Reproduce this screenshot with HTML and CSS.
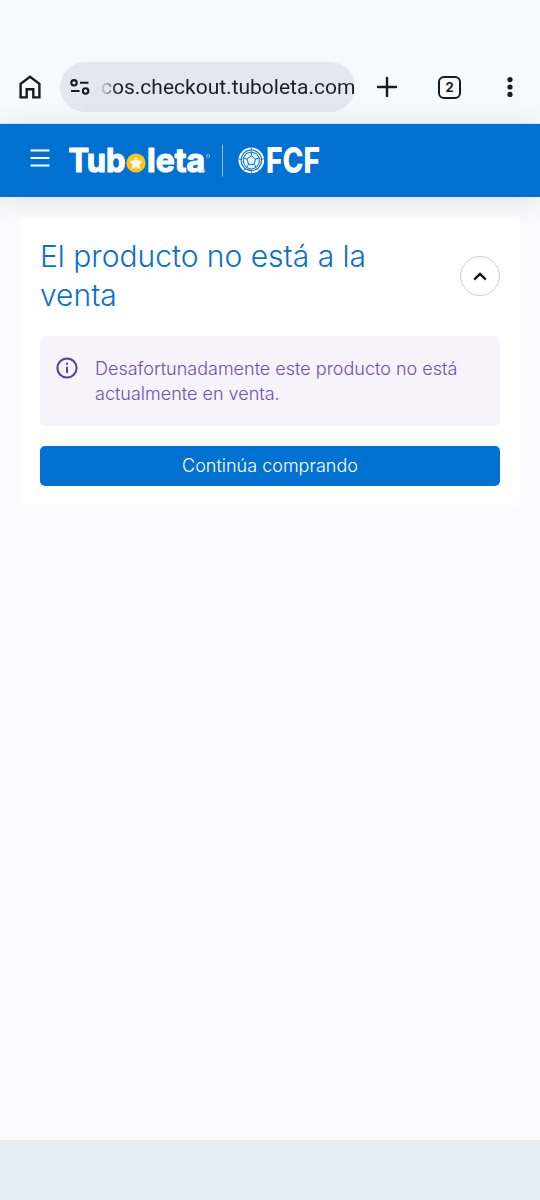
FILE: index.html
```html
<!DOCTYPE html>
<html lang="es">
<head>
<meta charset="utf-8">
<meta name="viewport" content="width=device-width, initial-scale=1">
<title>Tuboleta</title>
<link rel="stylesheet" href="styles.css">
</head>
<body>
<div class="browser-bar">
  <svg class="home" width="22" height="24" viewBox="0 0 22 24"><path d="M1.6 22.4V8.8L11 1.8l9.4 7v13.6h-6.1v-8.2H7.7v8.2z"/></svg>
  <div class="address">
    <svg class="tune" width="20" height="16" viewBox="0 0 20 16"><circle cx="4" cy="3.8" r="2.7"/><path d="M10 3.8h8.5M1 12h8.5"/><circle cx="15.6" cy="12" r="2.7"/></svg>
    <span class="url">cos.checkout.tuboleta.com</span>
  </div>
  <svg class="plus" width="20" height="20" viewBox="0 0 20 20"><path d="M10 1v18M1 10h18"/></svg>
  <span class="tabs">2</span>
  <svg class="more" width="6" height="20" viewBox="0 0 6 20"><circle cx="3" cy="2.6" r="2.6"/><circle cx="3" cy="10" r="2.6"/><circle cx="3" cy="17.4" r="2.6"/></svg>
</div>
<header class="site-header">
  <svg class="menu" width="20" height="18" viewBox="0 0 20 18"><path d="M.5 1.5h19M.5 9h19M.5 16.5h19"/></svg>
  <svg class="logo" width="260" height="40" viewBox="0 0 260 40">
    <text class="word" x="1.5" y="32" textLength="57" lengthAdjust="spacingAndGlyphs">Tub</text>
    <circle class="coin" cx="69" cy="23" r="9.6"/>
    <path class="star" d="M69 17.2l1.9 3.7 4.1.6-3 2.9.7 4.1-3.7-1.9-3.7 1.9.7-4.1-3-2.9 4.1-.6z"/>
    <text class="word" x="80" y="32" textLength="58" lengthAdjust="spacingAndGlyphs">leta</text>
    <circle class="mark" cx="141.2" cy="16" r="1.5"/><circle class="mark" cx="136.5" cy="31" r="1.5"/>
    <path class="divider" d="M155.5 4.5v32"/>
    <circle class="rim" cx="184.3" cy="20.3" r="11.8"/>
    <circle class="ball" cx="184.3" cy="20.3" r="9.7"/>
    <path class="seam" d="M184.3 15.8l4.4 3.3-1.7 5.2h-5.4l-1.7-5.2zM184.3 15.8v-3.6M188.7 19.1l3.6-1.1M187 24.3l2.2 3.2M181.6 24.3l-2.2 3.2M179.9 19.1l-3.6-1.1M179.2 13.5l5.1-1.5 5.1 1.5 2.9 4.5-.2 5.3-2.9 4.2-4.9 1.6-4.9-1.6-2.9-4.2-.2-5.3z"/>
    <path class="rim-gap" d="M184.3 7.8v3M196.8 18.8l-3 .7M191.8 30.5l-1.8-2.4M184.3 32.8v-3M176.8 30.5l1.8-2.4M171.8 18.8l3 .7"/>
    <text class="fcf" x="199" y="33.2" textLength="54" lengthAdjust="spacingAndGlyphs">FCF</text>
  </svg>
</header>
<main class="page">
  <section class="card">
    <div class="card-head">
      <h1 class="title">El producto no está a la venta</h1>
      <button class="collapse" aria-label="Contraer"><svg width="14" height="9" viewBox="0 0 14 9"><path d="M1.2 7.6L7 1.9l5.8 5.7"/></svg></button>
    </div>
    <div class="notice">
      <svg class="info" width="22" height="22" viewBox="0 0 22 22"><circle cx="11" cy="11" r="9.6"/><path d="M11 9.7v6.2"/><path d="M11 5.7v2"/></svg>
      <p class="message">Desafortunadamente este producto no está actualmente en venta.</p>
    </div>
    <button class="continue">Continúa comprando</button>
  </section>
</main>
<div class="system-bar"></div>
</body>
</html>
```

FILE: styles.css
```css
* { box-sizing: border-box; }
body {
  margin: 0;
  min-height: 1200px;
  display: flex;
  flex-direction: column;
  background: #fbfbfd;
  font-family: Inter, "Liberation Sans", sans-serif;
}
svg { display: block; flex: none; overflow: visible; fill: none; }
.browser-bar {
  height: 124px;
  padding: 51px 27px 0 19px;
  display: flex;
  align-items: center;
  background: #f6f9fe;
  border-bottom: 1px solid #dcebf8;
  color: #171b20;
}
.home { stroke: #171b20; stroke-width: 2.4; }
.address {
  width: 295px;
  height: 50px;
  margin-left: 19px;
  padding-left: 10px;
  border-radius: 25px;
  display: flex;
  align-items: center;
  background: #e1e8f0;
}
.tune { stroke: #171b20; stroke-width: 2.1; }
.url {
  margin-left: 11px;
  white-space: nowrap;
  font: 400 21px/50px Roboto, sans-serif;
  letter-spacing: 0;
  background: linear-gradient(90deg, #cdd3da 0, #777d84 9px, #1b2026 15px);
  background-clip: text;
  color: transparent;
}
.plus { margin-left: 22px; stroke: #171b20; stroke-width: 2.4; stroke-linecap: round; }
.tabs {
  width: 23px;
  height: 23px;
  margin-left: 41px;
  border: 2.4px solid #171b20;
  border-radius: 6px;
  font: 700 13px/18px Inter, sans-serif;
  text-align: center;
}
.more { margin-left: auto; fill: #171b20; }
.site-header {
  height: 73px;
  padding: 0 30px;
  display: flex;
  align-items: flex-start;
  background: #0070d1;
  box-shadow: 0 5px 28px rgba(40, 50, 75, .12);
}
.menu { margin-top: 25px; stroke: #fff; stroke-width: 2; }
.logo { margin: 16px 0 0 17px; }
.word { fill: #fff; stroke: #fff; stroke-width: 1.2; stroke-linejoin: round; font: 700 32px Inter, sans-serif; }
.coin { fill: #fcc51a; }
.star { fill: #fff; stroke: #fff; stroke-width: .7; stroke-linejoin: round; }
.mark { stroke: #a9d0f2; stroke-width: .8; }
.divider { stroke: #8bc0ed; }
.rim { stroke: #fff; stroke-width: 2.1; }
.ball { fill: #eaf5ff; }
.seam { stroke: #0070d1; stroke-width: 1; }
.rim-gap { stroke: #0070d1; stroke-width: 1; }
.fcf { fill: #fff; font: 800 35px Inter, sans-serif; }
.page { flex: 1; padding: 20px; }
.card { height: 288px; padding: 19px 20px 20px; border-radius: 4px; background: #fff; position: relative; }
.card-head { height: 80px; display: flex; justify-content: space-between; align-items: center; }
.title { width: 370px; margin: 0; color: #0c70c8; font-weight: 300; font-size: 30px; line-height: 39px; }
.collapse {
  width: 40px;
  height: 40px;
  padding: 0;
  border: 1px solid #d0d0d0;
  border-radius: 50%;
  display: grid;
  place-items: center;
  background: #fff;
}
.collapse path { stroke: #111; stroke-width: 2.2; }
.notice {
  height: 90px;
  margin-top: 20px;
  padding: 20px 16px;
  display: flex;
  gap: 17px;
  border-radius: 5px;
  background: #f6f3fb;
}
.info { margin-top: 1px; stroke: #5b3ca5; stroke-width: 2; }
.message { margin: 0; color: #6e50ad; font-weight: 300; font-size: 18px; line-height: 25px; white-space: normal; }
.continue {
  width: 100%;
  height: 40px;
  margin-top: 20px;
  padding: 0;
  border: 0;
  border-radius: 5px;
  background: #0070d1;
  color: #fff;
  font: 300 18px/40px Inter, sans-serif;
}
.system-bar { height: 60px; background: #e6eef5; }
```
